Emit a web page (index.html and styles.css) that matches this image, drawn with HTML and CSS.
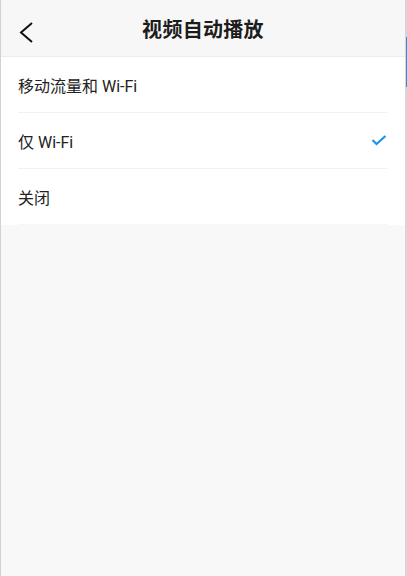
FILE: index.html
```html
<!DOCTYPE html>
<html lang="zh-CN">
    <head>
        <meta charset="utf-8">
        <link rel="stylesheet" href="styles.css">
    </head>
    <body>
        <div class="screen">
            <div class="header">
                <a class="back" href="#">
                    <svg width="16" height="24" viewBox="0 0 16 24">
                        <polyline points="13,3 2,12.5 13,22" fill="none" stroke="#111" stroke-width="2"/>
                    </svg>
                </a>
                <h1 class="title">视频自动播放</h1>
            </div>

            <ul class="options">
                <li class="option">移动流量和 Wi-Fi</li>
                <li class="option selected">
                    仅 Wi-Fi
                    <svg class="check" width="16" height="12" viewBox="0 0 16 12">
                        <polyline points="1.5,5 5.5,9 14.5,1" fill="none" stroke="#1a95e8" stroke-width="2.2"/>
                    </svg>
                </li>
                <li class="option">关闭</li>
            </ul>

            <div class="scrollbar"></div>
        </div>
    </body>
</html>
```

FILE: styles.css
```css
body{
    margin: 0;
    font-family: Roboto, "Noto Sans CJK SC", sans-serif;
    color: #1a1a1a;
}

.screen{
    position: relative;
    height: 576px;
    background-color: #f8f8f8;
    border-left: 1px solid #d2d2d2;
    border-right: 2px solid #d6d6d6;
    box-sizing: border-box;
    width: 407px;
}

.header{
    height: 56px;
    display: flex;
    align-items: center;
    justify-content: center;
    position: relative;
    background-color: #f7f7f7;
    border-bottom: 1px solid #ececec;
}

.back{
    position: absolute;
    left: 18px;
    top: 20px;
    display: block;
    height: 24px;
}

.title{
    margin: 0;
    font-size: 20px;
    font-weight: bold;
    color: #1c1c1c;
    letter-spacing: 0.3px;
}

.options{
    list-style: none;
    margin: 0;
    padding: 0 18px 0 17px;
    background-color: #ffffff;
}

.option{
    height: 55px;
    display: flex;
    align-items: center;
    justify-content: space-between;
    font-size: 16px;
    color: #222;
    border-bottom: 1px solid #f1f1f1;
}

.option:last-child{
    border-bottom-color: #f6f6f6;
}

.scrollbar{
    position: absolute;
    right: -2px;
    top: 37px;
    width: 1px;
    height: 50px;
    background-color: #2d8fe0;
}
```
